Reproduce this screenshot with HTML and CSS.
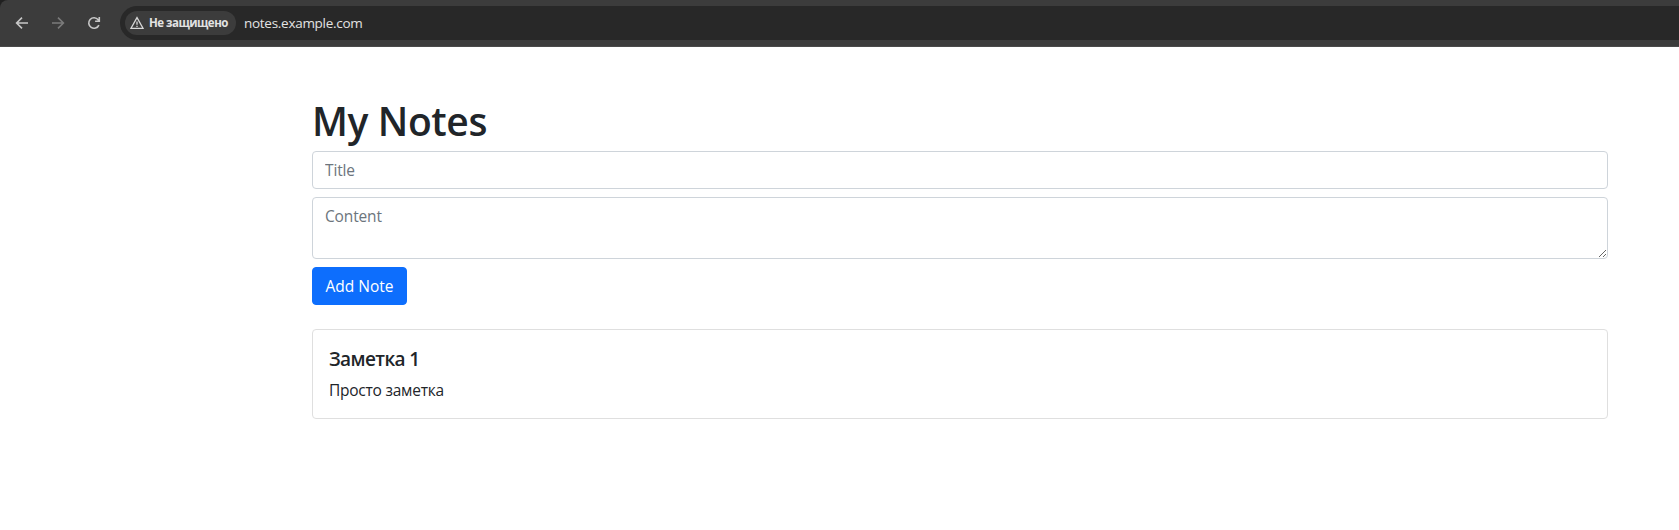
FILE: index.html
```html
<!DOCTYPE html>
<html lang="en">
<head>
<meta charset="utf-8">
<title>My Notes</title>
<link rel="stylesheet" href="styles.css">
</head>
<body>
<div class="frame">
<header class="toolbar">
  <nav class="nav">
    <svg class="icon" viewBox="0 0 16 16"><path d="M14 8H3M8 2.6 2.6 8 8 13.4"/></svg>
    <svg class="icon icon-off" viewBox="0 0 16 16"><path d="M2 8h11M8 2.6 13.4 8 8 13.4"/></svg>
    <svg class="icon" viewBox="0 0 16 16"><path d="M12.9 10.1A5.3 5.3 0 1 1 12.2 4.7L13.3 6M13.3 2v4.2H9.1"/></svg>
  </nav>
  <div class="address">
    <div class="chip">
      <svg class="warn" viewBox="0 0 14 14"><path d="M7 1.6 13 12.3H1ZM7 5.4v3.4M7 9.7v1.3"/></svg>
      <span class="chip-text">Не защищено</span>
    </div>
    <span class="url">notes.example.com</span>
  </div>
</header>
</div>
<main class="container">
  <h1 class="heading">My Notes</h1>
  <form class="form">
    <input class="control" type="text" placeholder="Title">
    <textarea class="control area" placeholder="Content"></textarea>
    <button class="btn" type="button">Add Note</button>
  </form>
  <article class="card">
    <h5 class="card-title">Заметка 1</h5>
    <p class="card-text">Просто заметка</p>
  </article>
</main>
</body>
</html>
```
FILE: styles.css
```css
* { box-sizing: border-box; }
body {
  margin: 0;
  background: #fff;
  color: #212529;
  font: 15.5px/24px "Open Sans", "Noto Sans", sans-serif;
  overflow: hidden;
}
.frame { background: #202020; }
.toolbar {
  display: flex;
  align-items: flex-start;
  height: 47px;
  padding: 6px 0 0 14px;
  background: #3c3c3c;
  border-bottom: 1px solid #4a4a4a;
  border-top-left-radius: 8px;
}
.nav { display: flex; gap: 20px; width: 106px; padding-top: 9px; }
.icon {
  flex: none;
  width: 16px;
  height: 16px;
  fill: none;
  stroke: #c7c7c7;
  stroke-width: 1.6;
}
.icon-off { stroke: #7b7b7b; }
.address {
  flex: 1;
  display: flex;
  align-items: center;
  height: 34px;
  padding-left: 5px;
  background: #282828;
  border-radius: 17px 0 0 17px;
}
.chip {
  display: flex;
  align-items: center;
  width: 111px;
  height: 24px;
  padding-left: 5px;
  background: #3c3c3c;
  border-radius: 12px;
  margin-right: 8px;
}
.warn {
  flex: none;
  width: 14px;
  height: 14px;
  margin-right: 5px;
  fill: none;
  stroke: #d8d8d8;
  stroke-width: 1.3;
}
.chip-text {
  color: #e3e3e3;
  font-size: 11.5px;
  font-weight: 700;
  letter-spacing: -.5px;
  white-space: nowrap;
}
.url { color: #e3e3e3; font-size: 13.5px; letter-spacing: -.28px; }
.container { width: 1320px; margin-left: 300px; padding: 48px 12px 0; }
.heading {
  margin: 0 0 8px;
  padding-top: 3px;
  font-size: 39px;
  line-height: 45px;
  font-weight: 600;
  letter-spacing: -.4px;
}
.form { display: flex; flex-direction: column; align-items: flex-start; gap: 8px; }
.control {
  display: block;
  width: 100%;
  height: 38px;
  padding: 6px 12px;
  color: #212529;
  background: #fff;
  border: 1px solid #ced4da;
  border-radius: 4px;
  font: inherit;
  letter-spacing: -.15px;
}
.control::placeholder { color: #6c757d; opacity: 1; }
.area { height: 62px; resize: vertical; }
.btn {
  width: 95px;
  height: 38px;
  padding: 6px 0;
  color: #fff;
  background: #0d6efd;
  border: 1px solid #0d6efd;
  border-radius: 4px;
  font: inherit;
  letter-spacing: 0;
}
.card {
  height: 90px;
  margin-top: 24px;
  padding: 17px 16px 15px;
  border: 1px solid #dfdfdf;
  border-radius: 4px;
}
.card-title {
  margin: 0 0 7px;
  font-size: 19px;
  line-height: 24px;
  font-weight: 600;
  letter-spacing: -.6px;
}
.card-text { margin: 0; letter-spacing: -.24px; }
```
